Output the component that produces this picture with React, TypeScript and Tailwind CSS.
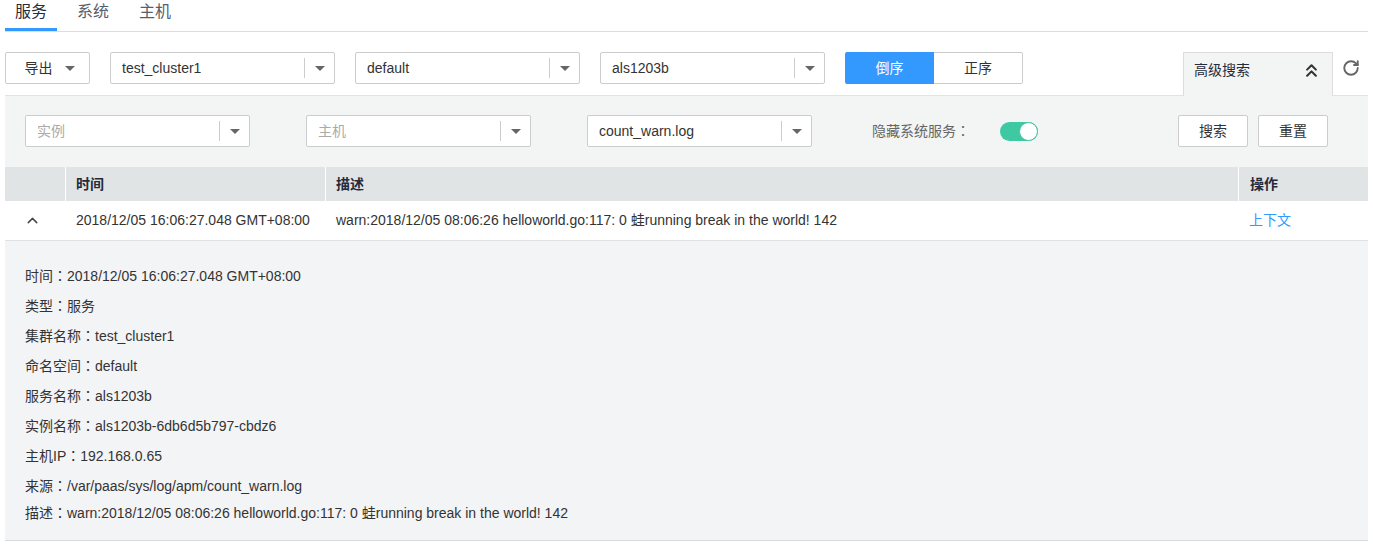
import { ChevronUp, ChevronsUp, RotateCw } from 'lucide-react'

const Caret = () => (
    <span className="inline-block w-0 h-0 border-l-[5px] border-r-[5px] border-t-[5px] border-l-transparent border-r-transparent border-t-[#666]" />
)

// fullwidth colon, centered like the reference font
const Colon = () => <span className="font-['Liberation_Sans','Noto_Sans_CJK_TC',sans-serif]">：</span>

const Select = ({ value, placeholder }: { value?: string, placeholder?: string }) => {
    return <div className="w-[225px] h-[32px] bg-white border border-[#ccc] rounded-[2px] flex items-center shrink-0">
        <div className={`flex-1 pl-[11px] text-[14px] ${value ? 'text-[#333]' : 'text-[#aaa]'}`}>{value ?? placeholder}</div>
        <div className="w-px h-[20px] bg-[#ccc]" />
        <div className="w-[29px] flex items-center justify-center"><Caret /></div>
    </div>
}

const details: [string, string][] = [
    ['时间', '2018/12/05 16:06:27.048 GMT+08:00'],
    ['类型', '服务'],
    ['集群名称', 'test_cluster1'],
    ['命名空间', 'default'],
    ['服务名称', 'als1203b'],
    ['实例名称', 'als1203b-6db6d5b797-cbdz6'],
    ['主机IP', '192.168.0.65'],
    ['来源', '/var/paas/sys/log/apm/count_warn.log'],
]

const msg = 'warn:2018/12/05 08:06:26 helloworld.go:117: 0 蛙running break in the world! 142'

export default function App() {
    return <div className="w-[1373px] h-[546px] bg-white overflow-hidden font-['Liberation_Sans','Noto_Sans_CJK_SC',sans-serif] text-[14px] text-[#333]">
        <div className="mx-[5px]">
            {/* tabs */}
            <div className="flex gap-[10px] border-b border-[#ddd]">
                <div className="h-[31px] w-[52px] text-center text-[16px] leading-[24px] text-[#252b3a] border-b-[3px] border-[#3399ff]">服务</div>
                <div className="h-[31px] w-[52px] text-center text-[16px] leading-[24px] text-[#575d6c]">系统</div>
                <div className="h-[31px] w-[52px] text-center text-[16px] leading-[24px] text-[#575d6c]">主机</div>
            </div>

            {/* toolbar */}
            <div className="mt-[20px] flex items-start h-[43px]">
                <div className="w-[85px] h-[32px] border border-[#ccc] rounded-[2px] flex items-center justify-center gap-[12px] pl-[4px] shrink-0">
                    <span>导出</span><Caret />
                </div>
                <div className="ml-[20px] flex gap-[20px]">
                    <Select value="test_cluster1" />
                    <Select value="default" />
                    <Select value="als1203b" />
                </div>
                <div className="ml-[20px] flex h-[32px] shrink-0">
                    <div className="w-[89px] bg-[#3399ff] text-white flex items-center justify-center rounded-l-[2px]">倒序</div>
                    <div className="w-[89px] border border-l-0 border-[#ccc] flex items-center justify-center rounded-r-[2px]">正序</div>
                </div>
                <div className="ml-auto relative z-10 w-[150px] h-[44px] -mb-px bg-[#f3f4f4] border border-b-0 border-[#ddd] flex items-center justify-between pl-[10px] pr-[10px] pb-[8px]">
                    <span className="text-[#252b3a]">高级搜索</span>
                    <ChevronsUp size={21} strokeWidth={2.4} className="text-[#333]" />
                </div>
                <div className="w-[35px] h-[32px] flex items-center justify-center">
                    <RotateCw size={18} strokeWidth={2.5} className="text-[#666]" />
                </div>
            </div>

            {/* search panel */}
            <div className="bg-[#f3f4f4] border-t border-[#e3e3e3] px-[20px] pt-[19px] pb-[20px] flex items-center">
                <Select placeholder="实例" />
                <div className="ml-[56px]"><Select placeholder="主机" /></div>
                <div className="ml-[56px]"><Select value="count_warn.log" /></div>
                <span className="ml-[60px] text-[#666]">隐藏系统服务<Colon /></span>
                <div className="ml-[30px] w-[38px] h-[19px] rounded-full bg-[#3fc9a3] flex items-center justify-end">
                    <div className="w-[19px] h-[19px] rounded-full bg-white border border-[#3fc9a3]" />
                </div>
                <div className="ml-auto mr-[20px] flex gap-[10px]">
                    <div className="w-[70px] h-[32px] bg-white border border-[#ccc] rounded-[2px] flex items-center justify-center">搜索</div>
                    <div className="w-[70px] h-[32px] bg-white border border-[#ccc] rounded-[2px] flex items-center justify-center">重置</div>
                </div>
            </div>

            {/* table header */}
            <div className="grid grid-cols-[60px_260px_1fr_130px] h-[34px] bg-[#e1e4e5] font-semibold text-[#252b3a]">
                <div />
                <div className="border-l border-white pl-[10px] flex items-center">时间</div>
                <div className="border-l border-white pl-[10px] flex items-center">描述</div>
                <div className="border-l border-white pl-[11px] flex items-center">操作</div>
            </div>

            {/* row */}
            <div className="grid grid-cols-[60px_260px_1fr_130px] h-[40px] border-b border-[#dfe1e6] bg-white">
                <div className="flex items-center pl-[19px]"><ChevronUp size={17} strokeWidth={2} className="text-[#444]" /></div>
                <div className="pl-[11px] flex items-center">2018/12/05 16:06:27.048 GMT+08:00</div>
                <div className="pl-[11px] flex items-center">{msg}</div>
                <div className="pl-[11px] flex items-center text-[#3399ff]">上下文</div>
            </div>

            {/* detail */}
            <div className="bg-[#f3f4f6] border-b border-[#d9d9d9] px-[20px] pt-[20px] pb-[15px]">
                {details.map(([k, v]) => (
                    <div key={k} className="leading-[30px]">{k}<Colon />{v}</div>
                ))}
                <div className="leading-[24px]">描述<Colon />{msg}</div>
            </div>
        </div>
    </div>
}
